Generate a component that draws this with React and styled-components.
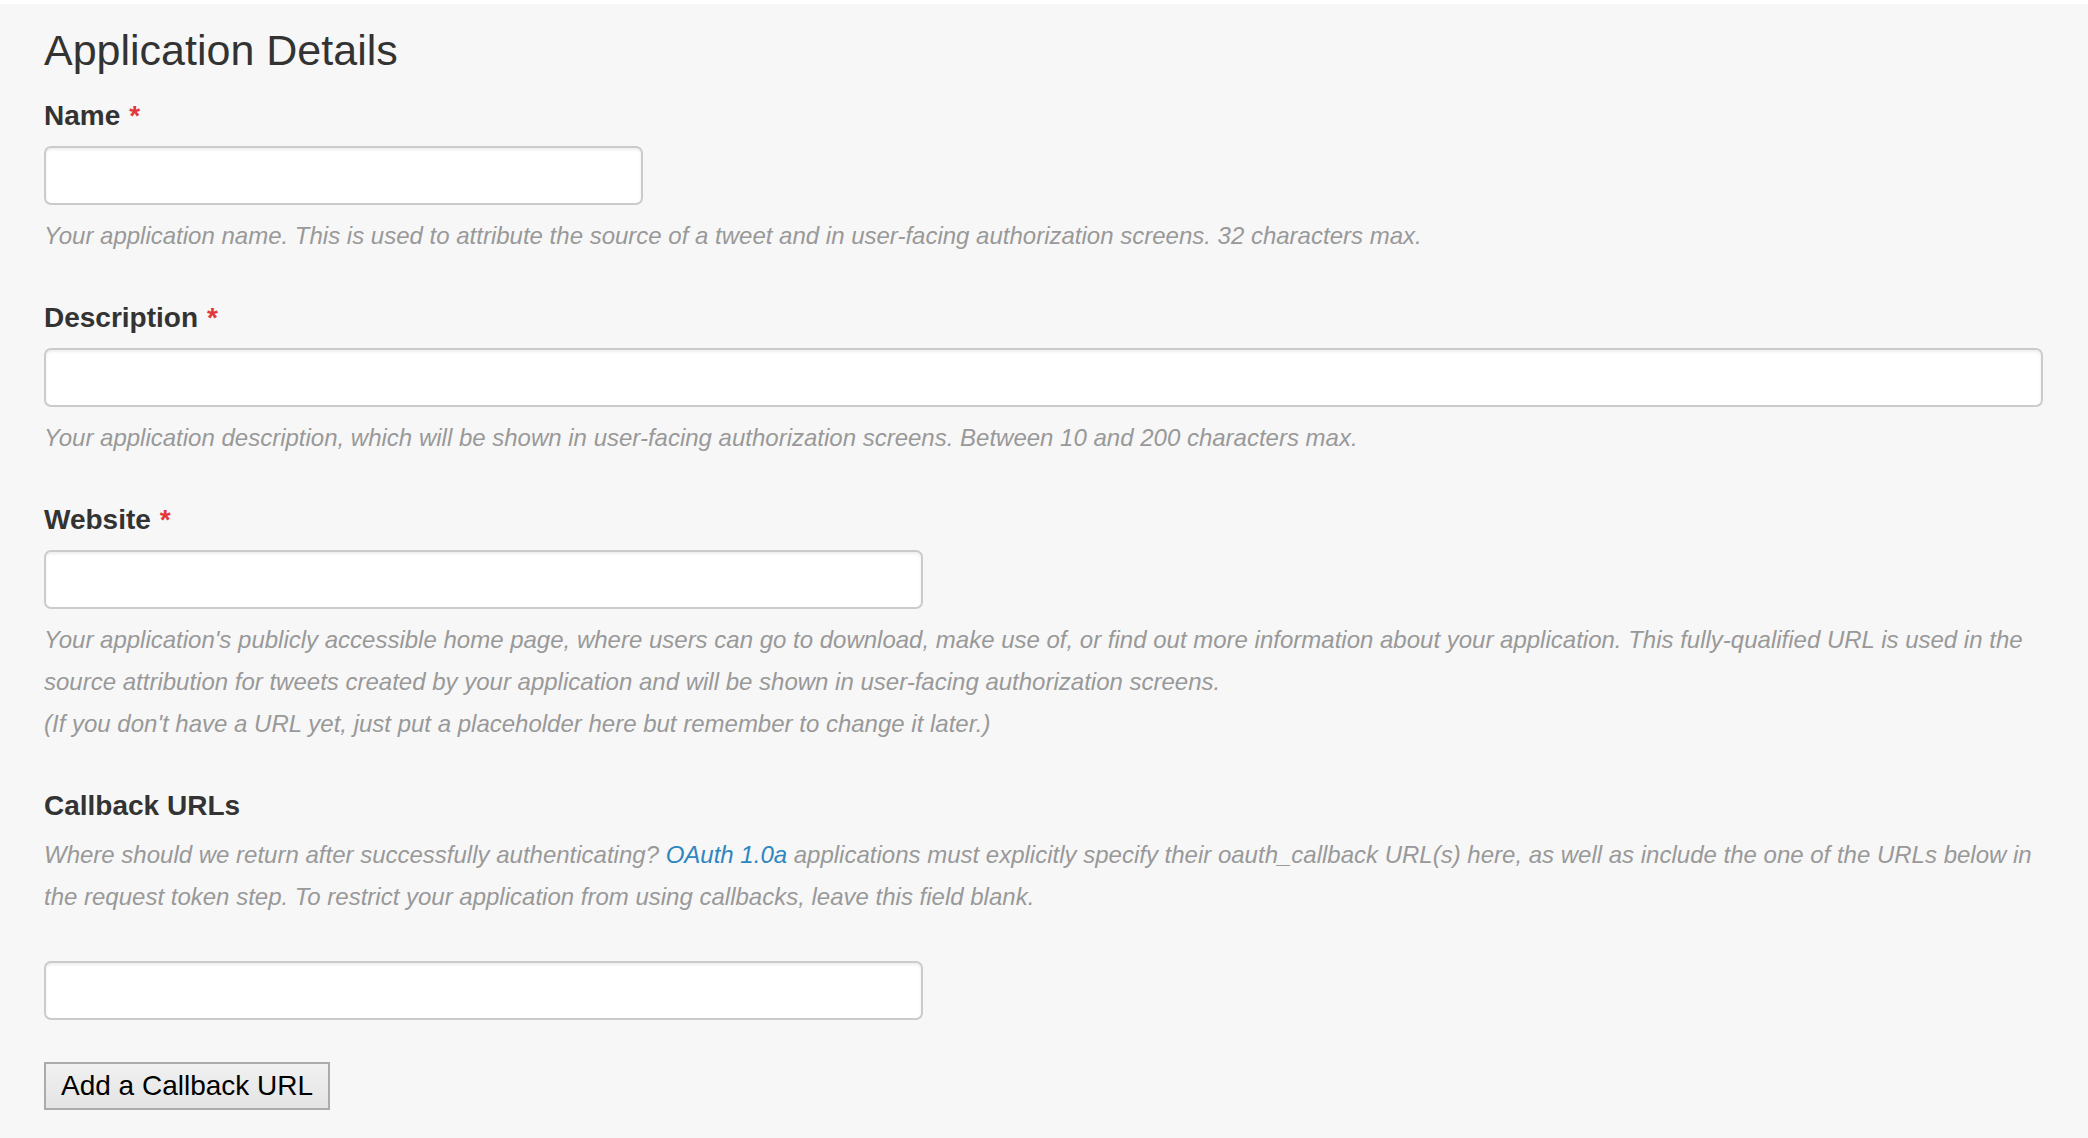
import React from 'react';
import styled, {createGlobalStyle} from 'styled-components';

const GlobalStyle = createGlobalStyle`
    html, body {
        margin: 0;
        padding: 0;
        background: #fff;
    }
    body {
        font-family: "Liberation Sans", Arial, Helvetica, sans-serif;
        color: #333;
    }
`

const Panel = styled.div`
    margin-top: 4px;
    min-height: 1134px;
    box-sizing: border-box;
    background-color: #f7f7f7;
    padding: 21px 45px 20px 44px;
`

const Title = styled.h2`
    margin: 0 0 24px 0;
    font-size: 43px;
    line-height: 50px;
    font-weight: normal;
    color: #333;
`

const Field = styled.div`
    margin-bottom: 44px;
`

const Label = styled.label`
    display: block;
    font-size: 28px;
    line-height: 34px;
    font-weight: bold;
    color: #333;
    margin-bottom: ${props => props.gap || 13}px;
`

const Required = styled.span`
    color: #e2383c;
    margin-left: 9px;
`

const Input = styled.input`
    display: block;
    box-sizing: border-box;
    width: ${props => props.width || '100%'};
    height: 59px;
    margin: ${props => props.top || 0}px 0 0 0;
    padding: 0 12px;
    border: 2px solid #cbcbcb;
    border-radius: 7px;
    background: #fff;
    box-shadow: inset 0 2px 3px rgba(0, 0, 0, 0.07);
    font-size: 26px;
    font-family: inherit;
    outline: none;
`

const Hint = styled.p`
    margin: ${props => props.top ?? 10}px 0 0 0;
    font-size: 24px;
    line-height: 42px;
    font-style: italic;
    color: #999;
`

const Link = styled.a`
    color: #2e86c1;
    text-decoration: none;
`

const Button = styled.button`
    display: block;
    margin-top: 42px;
    height: 48px;
    padding: 0 15px;
    border: 2px solid #ababab;
    border-radius: 0;
    background: linear-gradient(#f1f1f1, #e4e4e4);
    font-family: "Liberation Sans", Arial, sans-serif;
    font-size: 28px;
    color: #000;
`

export default function App() {
    return (
        <>
            <GlobalStyle />
            <Panel>
                <Title>Application Details</Title>

                <Field>
                    <Label>Name<Required>*</Required></Label>
                    <Input width="599px" />
                    <Hint>Your application name. This is used to attribute the source of a tweet and in user-facing authorization screens. 32 characters max.</Hint>
                </Field>

                <Field>
                    <Label>Description<Required>*</Required></Label>
                    <Input />
                    <Hint>Your application description, which will be shown in user-facing authorization screens. Between 10 and 200 characters max.</Hint>
                </Field>

                <Field>
                    <Label>Website<Required>*</Required></Label>
                    <Input width="879px" />
                    <Hint>
                        Your application's publicly accessible home page, where users can go to download, make use of, or find out more information about your application. This fully-qualified URL is used in the source attribution for tweets created by your application and will be shown in user-facing authorization screens.
                        <br />
                        (If you don't have a URL yet, just put a placeholder here but remember to change it later.)
                    </Hint>
                </Field>

                <div>
                    <Label gap={11}>Callback URLs</Label>
                    <Hint top={0}>
                        Where should we return after successfully authenticating? <Link href="#">OAuth 1.0a</Link> applications must explicitly specify their oauth_callback URL(s) here, as well as include the one of the URLs below in the request token step. To restrict your application from using callbacks, leave this field blank.
                    </Hint>
                    <Input width="879px" top={43} />
                    <Button>Add a Callback URL</Button>
                </div>
            </Panel>
        </>
    );
}
